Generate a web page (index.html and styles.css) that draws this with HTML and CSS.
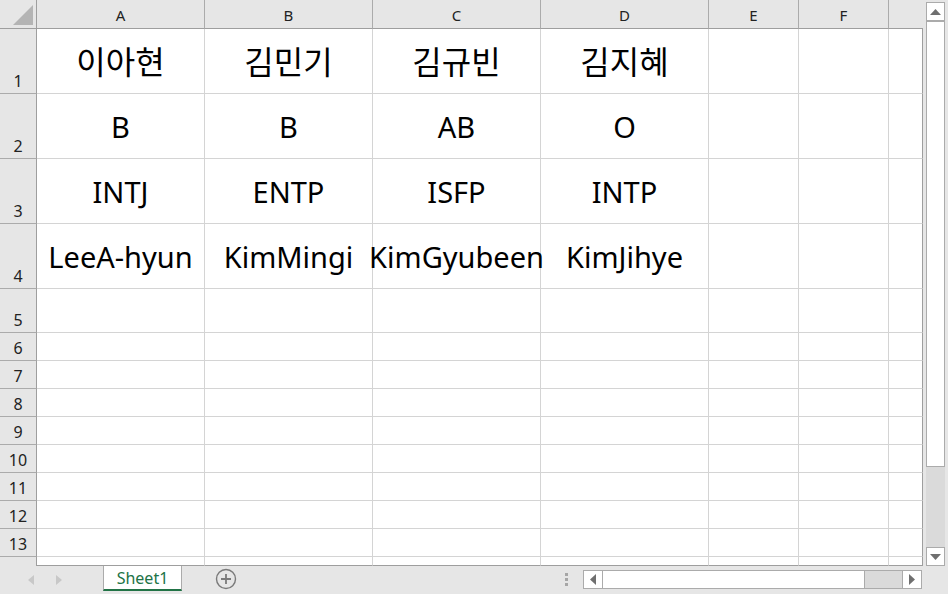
FILE: index.html
```html
<!DOCTYPE html>
<html lang="ko">
<head>
<meta charset="utf-8">
<link rel="stylesheet" href="styles.css">
</head>
<body>
<div class="app">
  <div class="main">
    <div class="sheet">
      <div class="hd corner"><svg class="tri" width="20" height="20" viewBox="0 0 20 20"><polygon points="20,0 20,20 0,20" fill="#b4b4b4"/></svg></div>
      <div class="hd col">A</div>
      <div class="hd col">B</div>
      <div class="hd col">C</div>
      <div class="hd col">D</div>
      <div class="hd col">E</div>
      <div class="hd col">F</div>
      <div class="hd col last"></div>

      <div class="hd row">1</div>
      <div class="c ko">이아현</div><div class="c ko">김민기</div><div class="c ko">김규빈</div><div class="c ko">김지혜</div><div class="c"></div><div class="c"></div><div class="c last"></div>

      <div class="hd row">2</div>
      <div class="c">B</div><div class="c">B</div><div class="c">AB</div><div class="c">O</div><div class="c"></div><div class="c"></div><div class="c last"></div>

      <div class="hd row">3</div>
      <div class="c">INTJ</div><div class="c">ENTP</div><div class="c">ISFP</div><div class="c">INTP</div><div class="c"></div><div class="c"></div><div class="c last"></div>

      <div class="hd row">4</div>
      <div class="c">LeeA-hyun</div><div class="c">KimMingi</div><div class="c">KimGyubeen</div><div class="c">KimJihye</div><div class="c"></div><div class="c"></div><div class="c last"></div>

      <div class="hd row">5</div>
      <div class="c"></div><div class="c"></div><div class="c"></div><div class="c"></div><div class="c"></div><div class="c"></div><div class="c last"></div>
      <div class="hd row">6</div>
      <div class="c"></div><div class="c"></div><div class="c"></div><div class="c"></div><div class="c"></div><div class="c"></div><div class="c last"></div>
      <div class="hd row">7</div>
      <div class="c"></div><div class="c"></div><div class="c"></div><div class="c"></div><div class="c"></div><div class="c"></div><div class="c last"></div>
      <div class="hd row">8</div>
      <div class="c"></div><div class="c"></div><div class="c"></div><div class="c"></div><div class="c"></div><div class="c"></div><div class="c last"></div>
      <div class="hd row">9</div>
      <div class="c"></div><div class="c"></div><div class="c"></div><div class="c"></div><div class="c"></div><div class="c"></div><div class="c last"></div>
      <div class="hd row">10</div>
      <div class="c"></div><div class="c"></div><div class="c"></div><div class="c"></div><div class="c"></div><div class="c"></div><div class="c last"></div>
      <div class="hd row">11</div>
      <div class="c"></div><div class="c"></div><div class="c"></div><div class="c"></div><div class="c"></div><div class="c"></div><div class="c last"></div>
      <div class="hd row">12</div>
      <div class="c"></div><div class="c"></div><div class="c"></div><div class="c"></div><div class="c"></div><div class="c"></div><div class="c last"></div>
      <div class="hd row">13</div>
      <div class="c"></div><div class="c"></div><div class="c"></div><div class="c"></div><div class="c"></div><div class="c"></div><div class="c last"></div>
      <div class="hd row partial"></div>
      <div class="c partial"></div><div class="c partial"></div><div class="c partial"></div><div class="c partial"></div><div class="c partial"></div><div class="c partial"></div><div class="c partial last"></div>
    </div>
    <div class="vscroll">
      <div class="vbtn up"><svg width="11" height="6" viewBox="0 0 11 6"><polygon points="5.5,0 11,6 0,6" fill="#6f6f6f"/></svg></div>
      <div class="vthumb"></div>
      <div class="vtrack"></div>
      <div class="vbtn down"><svg width="11" height="6" viewBox="0 0 11 6"><polygon points="0,0 11,0 5.5,6" fill="#6f6f6f"/></svg></div>
    </div>
  </div>
  <div class="bottom">
    <div class="nav">
      <svg width="8" height="10" viewBox="0 0 8 10"><polygon points="7,0 7,10 1,5" fill="#c8c8c8"/></svg>
      <svg width="8" height="10" viewBox="0 0 8 10"><polygon points="1,0 1,10 7,5" fill="#c8c8c8"/></svg>
    </div>
    <div class="tab">Sheet1</div>
    <div class="add"><svg width="22" height="22" viewBox="0 0 22 22"><circle cx="11" cy="11" r="9.5" fill="none" stroke="#7a7a7a" stroke-width="1.4"/><path d="M11 6v10M6 11h10" stroke="#7a7a7a" stroke-width="1.8"/></svg></div>
    <div class="spacer"></div>
    <div class="dots"><span></span><span></span><span></span></div>
    <div class="hscroll">
      <div class="hbtn"><svg width="6" height="11" viewBox="0 0 6 11"><polygon points="6,0 6,11 0,5.5" fill="#6f6f6f"/></svg></div>
      <div class="hthumb"></div>
      <div class="htrack"></div>
      <div class="hbtn"><svg width="6" height="11" viewBox="0 0 6 11"><polygon points="0,0 0,11 6,5.5" fill="#6f6f6f"/></svg></div>
    </div>
  </div>
</div>
</body>
</html>
```
FILE: styles.css
```css
* { box-sizing: border-box; }
html, body { margin: 0; padding: 0; background: #e6e6e6; }
body { width: 948px; height: 594px; overflow: hidden; font-family: "Noto Sans", "Noto Sans CJK KR", sans-serif; }
.app { display: flex; flex-direction: column; width: 948px; height: 594px; }
.main { display: flex; height: 566px; }
.sheet {
  display: grid;
  grid-template-columns: 37px 168px 168px 168px 168px 90px 90px 34px;
  grid-template-rows: 29px 65px 65px 65px 65px 44px repeat(8, 28px) 9px;
  width: 923px;
  height: 566px;
  background: #fff;
  overflow: hidden;
}
.hd { background: #e6e6e6; color: #222; }
.corner { position: relative; border-right: 1px solid #9e9e9e; border-bottom: 1px solid #9e9e9e; }
.tri { position: absolute; left: 13px; top: 5px; }
.col {
  border-right: 1px solid #ababab;
  border-bottom: 1px solid #9e9e9e;
  display: flex; align-items: center; justify-content: center;
  font-size: 15px; padding-top: 1px;
}
.col.last { border-right: none; }
.row {
  border-right: 1px solid #9e9e9e;
  border-bottom: 1px solid #ababab;
  display: flex; align-items: flex-end; justify-content: center;
  font-size: 16px; line-height: 16px; padding-bottom: 4px;
}
.row.partial { border-bottom: none; }
.c {
  border-right: 1px solid #d4d4d4;
  border-bottom: 1px solid #d4d4d4;
  display: flex; align-items: center; justify-content: center;
  font-size: 29px; color: #000; white-space: nowrap; overflow: visible;
  padding-top: 0;
}
.c.ko { font-size: 32px; padding-bottom: 3px; font-family: "Noto Sans CJK KR", sans-serif; }
.c.last { border-right: 1px solid #9e9e9e; }
.c.partial { border-bottom: 1px solid #9e9e9e; }
.vscroll { width: 25px; padding: 2px 3px 0 3px; display: flex; flex-direction: column; height: 566px; }
.vbtn { height: 19px; background: #fff; border: 1px solid #ababab; display: flex; align-items: center; justify-content: center; }
.vthumb { height: 446px; background: #fff; border: 1px solid #ababab; margin-top: 0; }
.vtrack { flex: 1; background: #dadada; }
.vbtn.down { height: 19px; }
.bottom { display: flex; align-items: stretch; height: 28px; }
.nav { width: 103px; display: flex; align-items: center; gap: 20px; padding-left: 27px; }
.tab {
  width: 79px; height: 25px; background: #fff;
  border-left: 1px solid #ababab; border-right: 1px solid #ababab;
  border-bottom: 2px solid #217346;
  color: #217346; font-size: 16px; font-family: "Noto Sans", sans-serif;
  display: flex; align-items: center; justify-content: center;
}
.add { width: 80px; display: flex; align-items: center; justify-content: center; padding-left: 8px; padding-bottom: 2px; }
.spacer { flex: 1; }
.dots { width: 18px; display: flex; flex-direction: column; justify-content: center; align-items: flex-start; gap: 2px; padding-bottom: 2px; }
.dots span { width: 3px; height: 3px; background: #a6a6a6; display: block; margin-left: 0; }
.hscroll { width: 339px; height: 19px; margin-top: 4px; margin-right: 26px; margin-left: 0; display: flex; border: 1px solid #ababab; }
.hbtn { width: 18px; background: #fff; display: flex; align-items: center; justify-content: center; }
.hthumb { width: 263px; background: #fff; border-left: 1px solid #ababab; border-right: 1px solid #ababab; }
.htrack { flex: 1; background: #dadada; border-right: 1px solid #ababab; }
```
